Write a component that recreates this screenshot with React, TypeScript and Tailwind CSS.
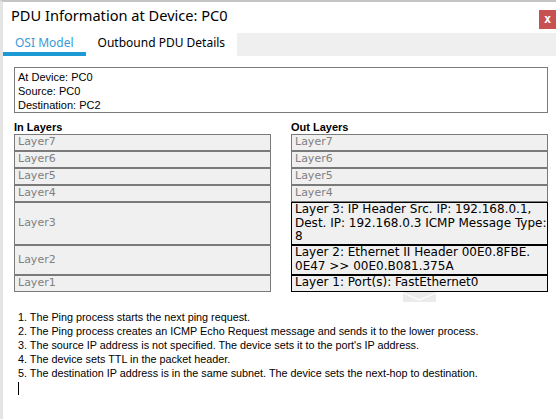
const inLayers = [
  { label: 'Layer7', h: 'h-[17px]' },
  { label: 'Layer6', h: 'h-[17px]' },
  { label: 'Layer5', h: 'h-[17px]' },
  { label: 'Layer4', h: 'h-[17px]' },
  { label: 'Layer3', h: 'h-[43px]' },
  { label: 'Layer2', h: 'h-[30px]' },
  { label: 'Layer1', h: 'h-[17px]' },
];

const outLayers = [
  { lines: ['Layer7'], h: 'h-[17px]', active: false },
  { lines: ['Layer6'], h: 'h-[17px]', active: false },
  { lines: ['Layer5'], h: 'h-[17px]', active: false },
  { lines: ['Layer4'], h: 'h-[17px]', active: false },
  { lines: ['Layer 3: IP Header Src. IP: 192.168.0.1,', 'Dest. IP: 192.168.0.3 ICMP Message Type:', '8'], h: 'h-[43px]', active: true },
  { lines: ['Layer 2: Ethernet II Header 00E0.8FBE.', '0E47 >> 00E0.B081.375A'], h: 'h-[30px]', active: true },
  { lines: ['Layer 1: Port(s): FastEthernet0'], h: 'h-[17px]', active: true },
];

const steps = [
  '1. The Ping process starts the next ping request.',
  '2. The Ping process creates an ICMP Echo Request message and sends it to the lower process.',
  "3. The source IP address is not specified. The device sets it to the port's IP address.",
  '4. The device sets TTL in the packet header.',
  '5. The destination IP address is in the same subnet. The device sets the next-hop to destination.',
];

const sans = "font-['Liberation_Sans',Arial,sans-serif]";
const verdana = "font-['DejaVu_Sans',Verdana,sans-serif]";

export default function App() {
  return (
    <div className="w-[556px] h-[419px] overflow-hidden bg-white border-l-[3px] border-t-2 border-l-[#e4e4e4] border-t-[#c4c4c4] flex flex-col">
      {/* title bar */}
      <div className="h-[31px] flex items-start justify-between shrink-0">
        <div className="pl-2 pt-[2px] text-[14.6px] leading-[22px] text-black font-['Noto_Sans',sans-serif]">PDU Information at Device: PC0</div>
        <button className="mt-2 w-[17px] h-[19px] bg-[#c75050] text-white text-[12px] font-bold leading-[19px] text-center font-['DejaVu_Sans_Mono',monospace]">x</button>
      </div>

      {/* tabs */}
      <div className="h-[23px] flex shrink-0 font-['Noto_Sans',sans-serif] text-[12px]">
        <div className="px-3 border-b-4 border-[#1b9ad6] text-[#3a9ad8] leading-[19px]">OSI Model</div>
        <div className="px-3 text-black leading-[19px]">Outbound PDU Details</div>
        <div className="flex-1 bg-[#efefef]" />
      </div>

      {/* info box */}
      <div className={`mt-[11px] ml-[11px] w-[534px] h-[46px] border border-[#7a7a7a] px-[3px] pt-[2px] text-[11px] leading-[14px] text-black ${sans}`}>
        <div>At Device: PC0</div>
        <div>Source: PC0</div>
        <div>Destination: PC2</div>
      </div>

      {/* layers */}
      <div className="mt-[8px] ml-[11px] flex gap-[20px]">
        <div className="w-[257px] flex flex-col">
          <div className={`h-[13px] text-[11px] leading-[13px] font-bold text-black ${sans}`}>In Layers</div>
          {inLayers.map(l => (
            <div key={l.label} className={`${l.h} border border-[#7a7a7a] bg-[#f0f0f0] px-[3px] flex items-center text-[11px] text-[#808080] ${verdana}`}>
              {l.label}
            </div>
          ))}
        </div>
        <div className="w-[257px] flex flex-col">
          <div className={`h-[13px] text-[11px] leading-[13px] font-bold text-black ${sans}`}>Out Layers</div>
          {outLayers.map(l => (
            <div
              key={l.lines[0]}
              className={`${l.h} border px-[3px] bg-[#f0f0f0] whitespace-nowrap ${verdana} ${l.active ? 'border-black text-black text-[12px] leading-[13.5px]' : 'border-[#7a7a7a] text-[#808080] text-[11px] flex items-center'}`}
            >
              {l.lines.map(t => (
                <div key={t}>{t}</div>
              ))}
            </div>
          ))}
          <div className="flex justify-center">
            <svg width="33" height="10" viewBox="0 0 33 10" className="block">
              <rect x="0" y="0" width="33" height="10" fill="#ebebeb" />
              <polyline points="0,1 16.5,8 33,1" fill="none" stroke="#fbfbfb" strokeWidth="1.5" />
            </svg>
          </div>
        </div>
      </div>

      {/* steps */}
      <div className={`mt-[8px] ml-[15px] text-[10.8px] leading-[14px] text-black ${sans}`}>
        {steps.map(s => (
          <div key={s}>{s}</div>
        ))}
        <div className="mt-[2px] w-px h-[13px] bg-black" />
      </div>
    </div>
  );
}
